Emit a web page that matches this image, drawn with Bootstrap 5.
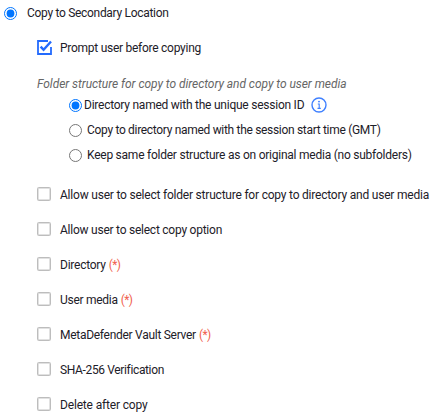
<!DOCTYPE html>
<html lang="en">
<head>
<meta charset="utf-8">
<title>Copy to Secondary Location</title>
<link href="https://cdn.jsdelivr.net/npm/bootstrap@5.3.0/dist/css/bootstrap.min.css" rel="stylesheet">
<style>
body{font:12px/17px Roboto,"Liberation Sans",sans-serif;color:#1d2028;background:#fff;overflow:hidden;letter-spacing:-.24px}
label{white-space:nowrap}
input[type=radio]{width:13px;height:13px;margin:0;flex:none;accent-color:#0075ff}
.main-option{height:27px;padding-left:4px}
.main-option label{margin-left:10px}
.check-row{height:35px;padding-left:37px}
.check-row label{margin-left:9px;padding-top:2px}
.prompt-row{height:41px}
.prompt-row label{margin-left:8px}
.folder-title{margin:8px 0 0 37px;height:17px;color:#666;font-style:italic}
.radio-row{height:25px;padding-left:69px}
.radio-row label{margin-left:5px}
.radio-row:first-child label{margin-left:2px}
.check-list{margin-top:9px}
.box{appearance:none;width:14px;height:14px;margin:0 0 1px;flex:none;border:1px solid #bdbdbd;box-shadow:inset 0 0 0 .5px #c4c4c4;border-radius:1.5px;background:#fff}
.required{color:#f0604d;margin-left:3px;letter-spacing:-.6px}
.ls-a{letter-spacing:-.304px}.ls-b{letter-spacing:-.266px}.ls-c{letter-spacing:-.049px}
.ls-d{letter-spacing:-.313px}.ls-e{letter-spacing:-.21px}.ls-f{letter-spacing:-.358px}.ls-g{letter-spacing:-.165px}
.ls-h{letter-spacing:-.28px}
.info-icon{margin:-2px 0 0 7px}
</style>
<script src="https://cdn.jsdelivr.net/npm/bootstrap@5.3.0/dist/js/bootstrap.bundle.min.js"></script>
</head>
<body>
<form>
  <div class="main-option d-flex align-items-center">
    <input type="radio" name="mode" id="mode" checked><label for="mode" class="ls-a">Copy to Secondary Location</label>
  </div>
  <div class="check-row prompt-row d-flex align-items-center">
    <svg width="15" height="15" viewBox="0 0 15 15" fill="none" stroke="#246bfd" stroke-width="1.8" aria-hidden="true"><path d="M11 1H1v13h13V7"/><path d="M3.6 6.6l3 3.2 7.4-8.3" stroke-width="2.4"/></svg>
    <label class="ls-b">Prompt user before copying</label>
  </div>
  <div class="folder-title ls-c text-nowrap">Folder structure for copy to directory and copy to user media</div>
  <div>
    <div class="radio-row d-flex align-items-center">
      <input type="radio" name="folder" id="f1" checked><label for="f1">Directory named with the unique session ID</label>
      <svg class="info-icon" width="16" height="16" viewBox="0 0 16 16" fill="none" stroke="#3f80ff" aria-hidden="true"><circle cx="8" cy="8" r="7" stroke-width="1.4"/><path d="M6.8 7h1.4v4.2M6.5 11.4h3.3" stroke-width="1.1"/><circle cx="8" cy="4.6" r=".95" fill="#3f80ff" stroke="none"/></svg>
    </div>
    <div class="radio-row d-flex align-items-center">
      <input type="radio" name="folder" id="f2"><label for="f2" class="ls-d">Copy to directory named with the session start time (GMT)</label>
    </div>
    <div class="radio-row d-flex align-items-center">
      <input type="radio" name="folder" id="f3"><label for="f3">Keep same folder structure as on original media (no subfolders)</label>
    </div>
  </div>
  <div class="check-list">
    <div class="check-row d-flex align-items-center"><input class="box" type="checkbox" id="c1"><label for="c1" class="ls-e">Allow user to select folder structure for copy to directory and user media</label></div>
    <div class="check-row d-flex align-items-center"><input class="box" type="checkbox" id="c2"><label for="c2">Allow user to select copy option</label></div>
    <div class="check-row d-flex align-items-center"><input class="box" type="checkbox" id="c3"><label for="c3">Directory<span class="required">(*)</span></label></div>
    <div class="check-row d-flex align-items-center"><input class="box" type="checkbox" id="c4"><label for="c4" class="ls-h">User media<span class="required">(*)</span></label></div>
    <div class="check-row d-flex align-items-center"><input class="box" type="checkbox" id="c5"><label for="c5" class="ls-h">MetaDefender Vault Server<span class="required">(*)</span></label></div>
    <div class="check-row d-flex align-items-center"><input class="box" type="checkbox" id="c6"><label for="c6" class="ls-f">SHA-256 Verification</label></div>
    <div class="check-row d-flex align-items-center"><input class="box" type="checkbox" id="c7"><label for="c7" class="ls-g">Delete after copy</label></div>
  </div>
</form>
</body>
</html>
